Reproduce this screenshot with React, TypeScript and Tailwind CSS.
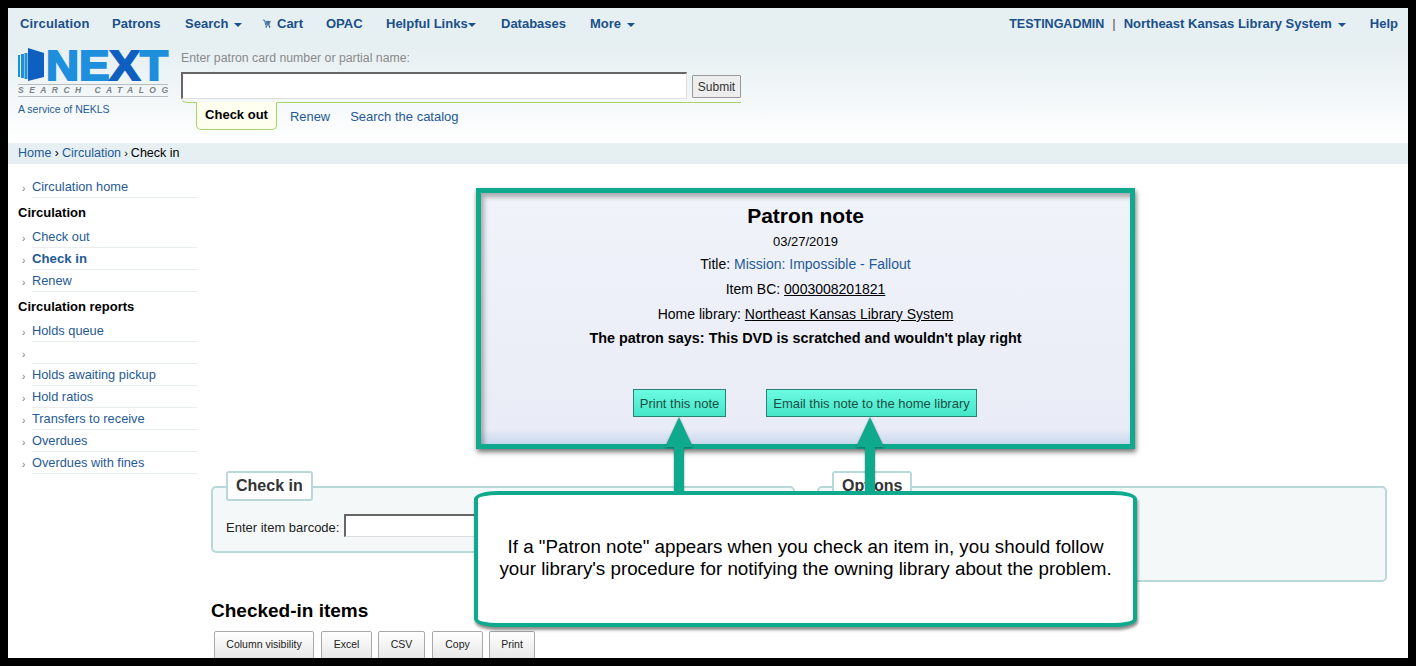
import React from "react";

const link = "text-[#1f5a96]";

function Caret() {
  return <span className="inline-block ml-[6px] align-middle w-0 h-0 border-x-[4px] border-x-transparent border-t-[4px] border-t-[#1a4f8a]" />;
}

function NavItem({ children, className = "" }: { children: React.ReactNode; className?: string }) {
  return <span className={`text-[#1a4f8a] font-bold whitespace-nowrap ${className}`}>{children}</span>;
}

function Logo() {
  return (
    <svg width="152" height="60" viewBox="0 -8 152 60" className="block -mt-[8px]">
      <rect x="0" y="7" width="2" height="22" fill="#1d8fdc" />
      <rect x="3" y="6" width="3" height="24" fill="#1d8fdc" />
      <rect x="6.5" y="5" width="3" height="26" fill="#1d8fdc" />
      <polygon points="10,0 26,5 26,29 10,33" fill="#0f5fc0" />
      <text x="28" y="32" fontFamily="Liberation Sans" fontWeight="700" fontSize="43" textLength="122" lengthAdjust="spacingAndGlyphs" stroke="#1d8fdc" strokeWidth="2" fill="#1d8fdc">
        NE<tspan fill="#0f5fc0" stroke="#0f5fc0">X</tspan>T
      </text>
      <rect x="0" y="36" width="150" height="1" fill="#b5bcc2" />
      <text x="0" y="45" fontFamily="Liberation Sans" fontWeight="700" fontStyle="italic" fontSize="8.5" textLength="150" fill="#7c8288">SEARCH CATALOG</text>
      <rect x="0" y="48" width="150" height="1" fill="#b5bcc2" />
    </svg>
  );
}

function SideLink({ children, bold = false }: { children?: React.ReactNode; bold?: boolean }) {
  return (
    <li className="flex h-[22px] items-center">
      <span className="w-[10px] ml-[14px] text-[10px] text-[#777] mt-[2px] shrink-0">›</span>
      <span className={`w-[165px] h-[22px] leading-[22px] border-b border-[#e8eeee] whitespace-nowrap ${link} ${bold ? "font-bold text-[#1a4f8a] text-[13.2px]" : ""}`}>{children}</span>
    </li>
  );
}

function Sidebar() {
  return (
    <aside className="w-[189px] shrink-0 pt-[12px] text-[12.8px]">
      <ul><SideLink>Circulation home</SideLink></ul>
      <h5 className="font-bold text-[13px] text-black ml-[10px] h-[28px] leading-[29px]">Circulation</h5>
      <ul>
        <SideLink>Check out</SideLink>
        <SideLink bold>Check in</SideLink>
        <SideLink>Renew</SideLink>
      </ul>
      <h5 className="font-bold text-[13px] text-black ml-[10px] h-[28px] leading-[29px]">Circulation reports</h5>
      <ul>
        <SideLink>Holds queue</SideLink>
        <SideLink />
        <SideLink>Holds awaiting pickup</SideLink>
        <SideLink>Hold ratios</SideLink>
        <SideLink>Transfers to receive</SideLink>
        <SideLink>Overdues</SideLink>
        <SideLink>Overdues with fines</SideLink>
      </ul>
    </aside>
  );
}

function Fieldset({ legend, className, children }: { legend: string; className: string; children?: React.ReactNode }) {
  return (
    <div className={`relative border-2 border-[#b9d8d9] rounded-[5px] bg-[#f4f8f9] ${className}`}>
      <div className="absolute left-[13px] top-[-17px] h-[30px] px-[8px] bg-white border-2 border-[#b9d8d9] rounded-[3px] font-bold text-[16px] leading-[26px] text-[#333]">
        {legend}
      </div>
      {children}
    </div>
  );
}

function Arrow({ className }: { className: string }) {
  return (
    <svg width="32" height="76" viewBox="0 0 32 76" className={`absolute drop-shadow-[0_1px_1px_rgba(0,0,0,0.35)] ${className}`}>
      <polygon points="16,0 30,30 21,30 21,76 11,76 11,30 2,30" fill="#0fa98e" />
    </svg>
  );
}

function DtButton({ children, className }: { children: React.ReactNode; className: string }) {
  return (
    <span className={`h-[30px] pt-[5px] text-center text-[10.5px] text-[#222] border border-[#a9a9a9] rounded-[2px] bg-gradient-to-b from-white to-[#e6e6e6] ${className}`}>
      {children}
    </span>
  );
}

export default function App() {
  return (
    <div className="w-[1416px] h-[666px] bg-black p-[8px] overflow-hidden" style={{ fontFamily: '"Liberation Sans", Arial, sans-serif' }}>
      <div className="relative w-[1400px] h-[650px] bg-white overflow-hidden">
        <header className="h-[135px] bg-gradient-to-b from-[#e6eff2] from-[30%] to-white">
          <nav className="flex items-center justify-between h-[31px] pt-[1px] pl-[12px] pr-[10px] text-[13px]">
            <div className="flex items-center">
              <NavItem className="w-[92px] tracking-[0.15px]">Circulation</NavItem>
              <NavItem className="w-[73px]">Patrons</NavItem>
              <NavItem className="w-[77px]">Search<Caret /></NavItem>
              <NavItem className="w-[64px]">
                <svg width="10" height="11" viewBox="0 0 12 12" className="inline mr-[5px] mb-[2px]">
                  <path d="M1 2h2l1.5 6h5M4 3.5h6.5M4.5 5h5.5M4 6.5h5.5M6 3.5v4M8 3.5v4" stroke="#1a4f8a" strokeWidth="0.9" fill="none" />
                  <circle cx="5" cy="10" r="1" fill="#1a4f8a" /><circle cx="9" cy="10" r="1" fill="#1a4f8a" />
                </svg>
                Cart
              </NavItem>
              <NavItem className="w-[60px]">OPAC</NavItem>
              <NavItem className="w-[115px]">Helpful Links<span className="inline-block align-middle w-0 h-0 border-x-[4px] border-x-transparent border-t-[4px] border-t-[#1a4f8a]" /></NavItem>
              <NavItem className="w-[89px]">Databases</NavItem>
              <NavItem>More<Caret /></NavItem>
            </div>
            <div className="flex items-baseline">
              <NavItem className="text-[12.5px]">TESTINGADMIN</NavItem>
              <span className="mx-[8px] text-[#555]">|</span>
              <NavItem>Northeast Kansas Library System<Caret /></NavItem>
              <NavItem className="ml-[24px]">Help</NavItem>
            </div>
          </nav>
          <div className="flex pl-[10px] pt-[9px]">
            <div className="w-[163px] shrink-0">
              <Logo />
              <p className="mt-[2px] text-[10.5px] text-[#1f5a96] whitespace-nowrap">A service of NEKLS</p>
            </div>
            <div className="w-[560px] mt-[1px]">
              <p className="text-[12.3px] text-[#8a8a8a] h-[23px] leading-[18px]">Enter patron card number or partial name:</p>
              <div className="flex items-start h-[31px] border-b border-[#a6d36a] rounded-bl-[6px]">
                <div className="w-[506px] h-[27px] border-2 border-b border-r border-[#666] border-b-[#ddd] border-r-[#ddd] bg-white" />
                <button className="ml-[5px] mt-[3px] w-[49px] h-[23px] border border-[#999] bg-[#eeeeee] text-[12px] text-[#333] rounded-[1px]">Submit</button>
              </div>
              <div className="flex items-start -mt-px text-[14px]">
                <span className="ml-[15px] w-[81px] h-[28px] text-center leading-[24px] font-bold text-[13px] text-black bg-[#fffff0] border border-t-[#fffff0] border-[#a6d36a] rounded-b-[5px]">Check out</span>
                <span className={`ml-[13px] mt-[5px] text-[12.9px] ${link}`}>Renew</span>
                <span className={`ml-[20px] mt-[5px] text-[13px] ${link}`}>Search the catalog</span>
              </div>
            </div>
          </div>
        </header>
        <div className="h-[21px] bg-[#e6eff2] pl-[10px] leading-[20px] text-[12.5px] text-black">
          <span className={link}>Home</span><span className="text-[12px]"> › </span><span className={link}>Circulation</span><span className="text-[11px]"> › </span>Check in
        </div>
        <main className="flex">
          <Sidebar />
          <section className="flex-1 pl-[14px] pr-[21px]">
            <div className="h-[322px]" />
            <div className="flex items-start gap-[22px] h-[97px]">
              <Fieldset legend="Check in" className="w-[584px] h-[67px]">
                <div className="flex items-start pl-[13px] pt-[26px] text-[13px] text-[#222]">
                  <span className="mt-[6px] leading-[16px]">Enter item barcode:</span>
                  <div className="ml-[5px] w-[140px] h-[23px] border-2 border-b border-r border-[#666] border-b-[#ddd] border-r-[#ddd] bg-white" />
                </div>
              </Fieldset>
              <Fieldset legend="Options" className="flex-1 h-[96px]" />
            </div>
            <h2 className="mt-[17px] font-bold text-[19px] leading-[22px] text-black">Checked-in items</h2>
            <div className="flex mt-[9px] pl-[3px]">
              <DtButton className="w-[100px]">Column visibility</DtButton>
              <DtButton className="w-[51px] ml-[7px]">Excel</DtButton>
              <DtButton className="w-[47px] ml-[6px]">CSV</DtButton>
              <DtButton className="w-[51px] ml-[7px]">Copy</DtButton>
              <DtButton className="w-[46px] ml-[6px]">Print</DtButton>
            </div>
          </section>
        </main>

        {/* Patron note overlay */}
        <div className="absolute left-[468px] top-[180px] w-[659px] h-[261px] border-[5px] border-[#0fa98e] shadow-[1px_3px_5px_rgba(0,0,0,0.55),inset_3px_4px_5px_rgba(0,0,0,0.3)] bg-gradient-to-b from-[#f1f3fa] via-[#e9ecf6] via-[94%] to-[#c9d8ef] flex flex-col items-center text-black">
          <h1 className="font-bold text-[21px] leading-[24px] mt-[11px]">Patron note</h1>
          <p className="text-[13px] mt-[6px] leading-[16px]">03/27/2019</p>
          <p className="text-[14px] mt-[6px] leading-[16px]">Title: <span className="text-[#1f5a96]">Mission: Impossible - Fallout</span></p>
          <p className="text-[14px] mt-[9px] leading-[16px]">Item BC: <span className="underline">0003008201821</span></p>
          <p className="text-[14px] mt-[9px] leading-[16px]">Home library: <span className="underline">Northeast Kansas Library System</span></p>
          <p className="text-[14.4px] font-bold mt-[8px] leading-[16px]">The patron says: This DVD is scratched and wouldn't play right</p>
          <div className="flex mt-[43px] gap-[40px] -ml-[1px]">
            <span className="w-[93px] h-[28px] text-center leading-[27px] text-[13px] text-[#1d4f46] border border-[#2a8272] bg-gradient-to-b from-[#6bfbe2] to-[#45e6c8]">Print this note</span>
            <span className="w-[211px] h-[28px] text-center leading-[27px] text-[13px] text-[#1d4f46] border border-[#2a8272] bg-gradient-to-b from-[#6bfbe2] to-[#45e6c8]">Email this note to the home library</span>
          </div>
        </div>
        <Arrow className="left-[655px] top-[409px]" />
        <Arrow className="left-[846px] top-[409px]" />

        {/* Callout */}
        <div className="absolute left-[466px] top-[483px] w-[663px] h-[136px] border-[4px] border-[#0fa98e] bg-white rounded-[24px/8px] shadow-[1px_3px_3px_rgba(0,0,0,0.45)] flex items-center justify-center text-center text-[18.8px] leading-[22px] text-black pb-[2px]">
          <p>If a "Patron note" appears when you check an item in, you should follow<br />your library's procedure for notifying the owning library about the problem.</p>
        </div>
      </div>
    </div>
  );
}
